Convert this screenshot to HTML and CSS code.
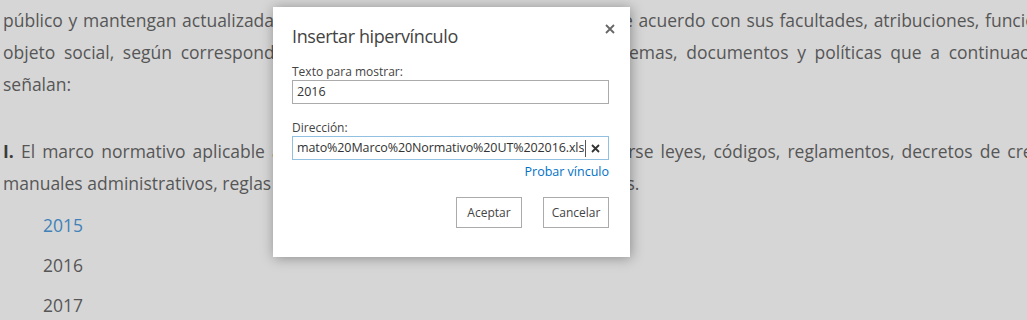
FILE: index.html
```html
<!DOCTYPE html>
<html lang="es">
<head>
  <meta charset="UTF-8" />
  <meta name="viewport" content="width=device-width, initial-scale=1.0"/>
  <title>Insertar hipervínculo</title>
  <link rel="stylesheet" href="styles.css">
</head>
<body>
  <div class="page">
    <p class="article">
      <span class="line">En la Ley Federal y de las Entidades Federativas se contemplará que los sujetos obligados pongan a disposición del</span>
      <span class="line">público y mantengan actualizada, en los respectivos medios electrónicos, de acuerdo con sus facultades, atribuciones, funciones u</span>
      <span class="line">objeto social, según corresponda, la información, por lo menos, de los temas, documentos y políticas que a continuación se</span>
      señalan:
    </p>
    <p class="article">
      <span class="line"><b>I.</b> El marco normativo aplicable al sujeto obligado, en el que deberá incluirse leyes, códigos, reglamentos, decretos de creación,</span>
      manuales administrativos, reglas de operación, criterios, políticas, entre otros.
    </p>
    <ul class="years">
      <li><a href="#">2015</a></li>
      <li>2016</li>
      <li>2017</li>
    </ul>
  </div>

  <!-- Dialog over the dimmed page -->
  <div class="dialog">
    <div class="dialog-head">
      <h1>Insertar hipervínculo</h1>
      <span class="close">
        <svg width="10" height="10" viewBox="0 0 10 10"><path d="M1 1L9 9M9 1L1 9" stroke="#666" stroke-width="1.8"/></svg>
      </span>
    </div>
    <div class="field">
      <label>Texto para mostrar:</label>
      <div class="input">2016</div>
    </div>
    <div class="field">
      <label>Dirección:</label>
      <div class="input focused">
        <span class="value">mato%20Marco%20Normativo%20UT%202016.xls</span>
        <span class="caret"></span>
        <span class="clear">
          <svg width="9" height="9" viewBox="0 0 9 9"><path d="M1 1L8 8M8 1L1 8" stroke="#333" stroke-width="1.8"/></svg>
        </span>
      </div>
      <a class="test-link" href="#">Probar vínculo</a>
    </div>
    <div class="actions">
      <button class="btn">Aceptar</button>
      <button class="btn">Cancelar</button>
    </div>
  </div>
</body>
</html>
```

FILE: styles.css
```css
body {
  margin: 0;
  padding: 0;
  background-color: #d6d6d6;
  font-family: 'Open Sans', sans-serif;
  overflow: hidden;
  height: 320px;
}
.page {
  width: 1078px;
  padding-left: 3px;
  margin-top: -28px;
  color: #565656;
  font-size: 17.5px;
  line-height: 32px;
}
.article {
  margin: 0 0 35px;
}
.article + .article {
  margin-bottom: 10px;
}
.article .line {
  display: block;
  text-align: justify;
  text-align-last: justify;
}
.article b {
  color: #3c3c3c;
}
.years {
  list-style: none;
  margin: 0;
  padding-left: 40px;
}
.years li {
  margin-bottom: 8px;
}
.years a {
  color: #3f82b8;
  text-decoration: none;
}
.dialog {
  position: absolute;
  left: 273px;
  top: 7px;
  width: 357px;
  height: 250px;
  box-sizing: border-box;
  padding: 0 21px 0 19px;
  background: #fff;
  box-shadow: 1px 1px 12px rgba(0, 0, 0, 0.35);
  color: #444;
}
.dialog-head {
  display: flex;
  justify-content: space-between;
  align-items: flex-start;
  padding-top: 16px;
  height: 40px;
}
.dialog-head h1 {
  margin: 0;
  font-size: 18px;
  font-weight: 400;
  letter-spacing: -0.4px;
  line-height: 26px;
  color: #444;
}
.close {
  margin-top: 1px;
  margin-right: -6px;
  display: flex;
}
.field {
  display: flex;
  flex-direction: column;
  margin-bottom: 13px;
}
.field label {
  font-size: 12px;
  line-height: 17px;
  color: #444;
}
.input {
  height: 24px;
  box-sizing: border-box;
  border: 1px solid #ababab;
  padding: 0 4px;
  font-size: 12.5px;
  line-height: 22px;
  color: #333;
  display: flex;
  align-items: center;
}
.field + .field label {
  margin-top: 2px;
}
.input.focused {
  border-color: #92c0e0;
}
.value {
  white-space: nowrap;
  overflow: hidden;
  letter-spacing: -0.1px;
}
.caret {
  width: 1px;
  height: 17px;
  background: #555;
  margin-left: 1px;
}
.clear {
  margin-left: auto;
  padding-right: 4px;
  display: flex;
}
.test-link {
  align-self: flex-end;
  margin-top: 2px;
  font-size: 12.5px;
  line-height: 20px;
  color: #0072c6;
  text-decoration: none;
}
.actions {
  display: flex;
  justify-content: flex-end;
  gap: 21px;
  margin-top: 15px;
}
.btn {
  width: 66px;
  height: 31px;
  background: #fff;
  border: 1px solid #ababab;
  font-family: 'Open Sans', sans-serif;
  font-size: 12px;
  color: #444;
  padding: 0;
}
```
